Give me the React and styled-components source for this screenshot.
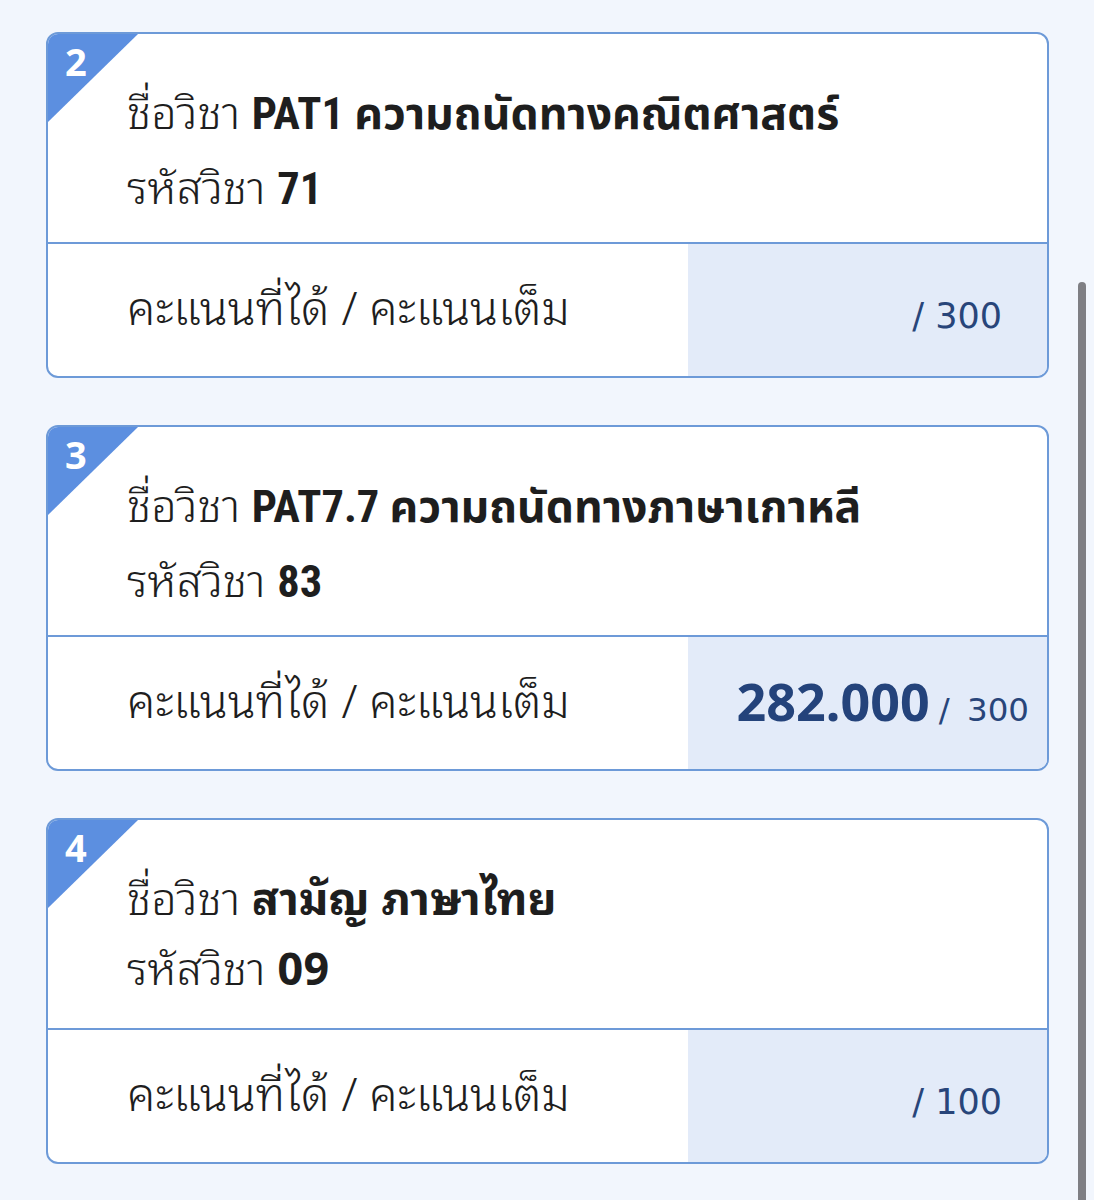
import React from "react";
import styled, { createGlobalStyle, css } from "styled-components";

const GlobalStyle = createGlobalStyle`
  html, body {
    margin: 0;
    padding: 0;
    background: #f2f6fd;
  }
  body {
    font-family: "Noto Sans Thai Looped", "Noto Sans", sans-serif;
    color: #1e1e1e;
  }
`;

const Page = styled.div`
  display: flex;
  flex-direction: column;
  gap: 47px;
  padding: 32px 0 40px 46px;
  height: 1200px;
  box-sizing: border-box;
  overflow: hidden;
`;

const Card = styled.div`
  position: relative;
  width: 1003px;
  box-sizing: border-box;
  border: 2px solid #6d9ad8;
  border-radius: 12px;
  background: #fff;
  overflow: hidden;
  flex-shrink: 0;
`;

const Badge = styled.div`
  position: absolute;
  top: 0;
  left: 0;
  width: 90px;
  height: 88px;
  background: #5c8fe0;
  clip-path: polygon(0 0, 100% 0, 0 100%);
  span {
    position: absolute;
    top: 8px;
    left: 17px;
    color: #fff;
    font-family: "Noto Sans", "Open Sans", sans-serif;
    font-weight: 700;
    font-size: 38px;
    line-height: 1;
  }
`;

const Header = styled.div`
  display: flex;
  flex-direction: column;
  padding: 40px 0 0 79px;
  height: 210px;
  box-sizing: border-box;
  border-bottom: 2px solid #6d9ad8;
  font-size: 45px;
  font-weight: 350;
`;

const Line = styled.div`
  white-space: nowrap;
  line-height: 70px;
`;

const Value = styled.b`
  font-weight: 700;
  ${(p) =>
    p.$condensed &&
    css`
      font-family: "Roboto Condensed", "Noto Sans Thai", sans-serif;
      font-stretch: condensed;
      font-size: 44.5px;
    `}
`;

const ScoreRow = styled.div`
  display: flex;
  height: 132px;
`;

const ScoreLabel = styled.div`
  flex: 1;
  display: flex;
  align-items: center;
  padding: 0 0 12px 79px;
  font-size: 46px;
  font-weight: 350;
  white-space: nowrap;
`;

const ScoreCell = styled.div`
  width: 359px;
  background: #e3ebf9;
  display: flex;
  align-items: baseline;
  justify-content: flex-end;
  align-content: flex-end;
  flex-wrap: wrap;
  box-sizing: border-box;
  padding: 0 ${(p) => (p.$filled ? "18px 42px" : "45px 42px")} 0;
  color: #28457a;
  font-family: "Noto Sans", "Open Sans", sans-serif;
`;

const Score = styled.span`
  font-size: 52px;
  font-weight: 700;
  line-height: 1;
  margin-right: 9px;
  color: #24437b;
`;

const Full = styled.span`
  font-family: "DejaVu Sans", "Noto Sans", sans-serif;
  font-size: ${(p) => (p.$small ? "32.5px" : "35px")};
  word-spacing: ${(p) => (p.$small ? "7px" : "0")};
  line-height: 1;
`;

const Scrollbar = styled.div`
  position: fixed;
  top: 282px;
  left: 1078px;
  width: 8px;
  height: 960px;
  border-radius: 4px;
  background: #7f7f84;
`;

const subjects = [
  { no: 2, name: "PAT1 ความถนัดทางคณิตศาสตร์", code: "71", score: null, full: 300, condensed: true },
  { no: 3, name: "PAT7.7 ความถนัดทางภาษาเกาหลี", code: "83", score: "282.000", full: 300, condensed: true },
  { no: 4, name: "สามัญ ภาษาไทย", code: "09", score: null, full: 100, condensed: false },
];

const App = () => {
  return (
    <>
      <GlobalStyle />
      <Page>
        {subjects.map((s) => (
          <Card key={s.no}>
            <Badge>
              <span>{s.no}</span>
            </Badge>
            <Header>
              <Line>
                ชื่อวิชา <Value $condensed={s.condensed}>{s.name}</Value>
              </Line>
              <Line>
                รหัสวิชา <Value $condensed={s.condensed}>{s.code}</Value>
              </Line>
            </Header>
            <ScoreRow>
              <ScoreLabel>คะแนนที่ได้ / คะแนนเต็ม</ScoreLabel>
              <ScoreCell $filled={!!s.score}>
                {s.score && <Score>{s.score}</Score>}
                <Full $small={!!s.score}>/ {s.full}</Full>
              </ScoreCell>
            </ScoreRow>
          </Card>
        ))}
      </Page>
      <Scrollbar />
    </>
  );
};

export default App;
